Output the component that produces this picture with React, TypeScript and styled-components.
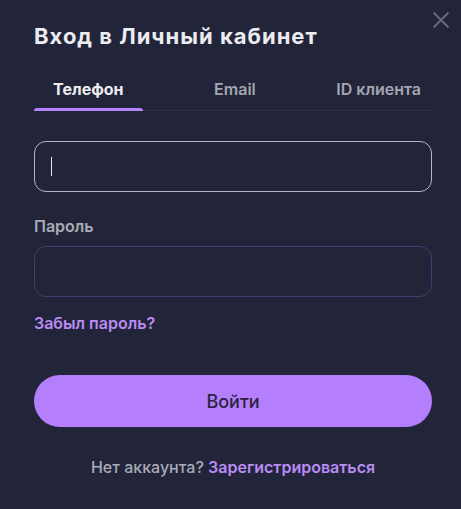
import React from 'react';
import styled, { createGlobalStyle } from 'styled-components';

const GlobalStyle = createGlobalStyle`
  html, body {
    margin: 0;
    padding: 0;
    background: #22253a;
  }
  body {
    font-family: Inter, "Noto Sans", sans-serif;
  }
`;

const Modal = styled.div`
  position: relative;
  width: 461px;
  height: 509px;
  box-sizing: border-box;
  padding: 22px 29px 0 34px;
  background: #22253a;
  display: flex;
  flex-direction: column;
`;

const CloseButton = styled.button`
  position: absolute;
  top: 11px;
  right: 11px;
  width: 18px;
  height: 18px;
  padding: 0;
  border: none;
  background: transparent;
  color: #64687b;
  display: flex;
  align-items: center;
  justify-content: center;
`;

const Title = styled.h1`
  margin: 0;
  font-size: 22px;
  line-height: 28px;
  font-weight: 700;
  letter-spacing: 1px;
  color: #ececf0;
`;

const Tabs = styled.div`
  margin-top: 29px;
  display: flex;
  justify-content: space-between;
  border-bottom: 1px solid #2d3046;
`;

const Tab = styled.div<{ $active?: boolean }>`
  position: relative;
  padding: 0 19px 11px;
  font-size: 16px;
  line-height: 20px;
  font-weight: ${(p) => (p.$active ? 700 : 600)};
  color: ${(p) => (p.$active ? '#ececf0' : '#a4a6b1')};
  &:last-child {
    padding-left: 9px;
    padding-right: 11px;
  }
  &::after {
    content: '';
    display: ${(p) => (p.$active ? 'block' : 'none')};
    position: absolute;
    left: 0;
    right: 0;
    bottom: -1px;
    height: 3px;
    border-radius: 3px 3px 0 0;
    background: #b684fb;
  }
`;

const Field = styled.div<{ $focused?: boolean }>`
  height: 51px;
  box-sizing: border-box;
  border-radius: 12px;
  border: 1px solid ${(p) => (p.$focused ? '#b3b5c0' : '#3d4070')};
  display: flex;
  align-items: center;
  padding: 0 16px;
`;

const Caret = styled.span`
  width: 1px;
  height: 19px;
  background: #e6e6ec;
`;

const PhoneField = styled(Field)`
  margin-top: 30px;
`;

const Label = styled.div`
  margin-top: 24px;
  font-size: 16px;
  line-height: 20px;
  font-weight: 600;
  color: #a9abb5;
`;

const PasswordField = styled(Field)`
  margin-top: 10px;
`;

const Link = styled.a`
  color: #b98cf3;
  font-weight: 600;
  text-decoration: none;
  cursor: pointer;
`;

const Forgot = styled(Link)`
  margin-top: 16px;
  font-size: 16px;
  line-height: 20px;
  align-self: flex-start;
`;

const SubmitButton = styled.button`
  margin-top: 42px;
  height: 52px;
  border: none;
  border-radius: 26px;
  background: #b57efc;
  color: #2b2342;
  font-family: Inter, "Noto Sans", sans-serif;
  font-size: 18px;
  font-weight: 500;
`;

const Footer = styled.div`
  margin-top: 30px;
  text-align: center;
  font-size: 16px;
  line-height: 20px;
  font-weight: 500;
  color: #a9abb5;
`;

export default function App() {
  return (
    <>
      <GlobalStyle />
      <Modal>
        <CloseButton aria-label="Закрыть">
          <svg width="18" height="18" viewBox="0 0 18 18" fill="none" stroke="currentColor" strokeWidth="2">
            <path d="M1.5 1.5L16.5 16.5M16.5 1.5L1.5 16.5" />
          </svg>
        </CloseButton>
        <Title>Вход в Личный кабинет</Title>
        <Tabs>
          <Tab $active>Телефон</Tab>
          <Tab>Email</Tab>
          <Tab>ID клиента</Tab>
        </Tabs>
        <PhoneField $focused>
          <Caret />
        </PhoneField>
        <Label>Пароль</Label>
        <PasswordField />
        <Forgot>Забыл пароль?</Forgot>
        <SubmitButton>Войти</SubmitButton>
        <Footer>
          Нет аккаунта? <Link>Зарегистрироваться</Link>
        </Footer>
      </Modal>
    </>
  );
}
